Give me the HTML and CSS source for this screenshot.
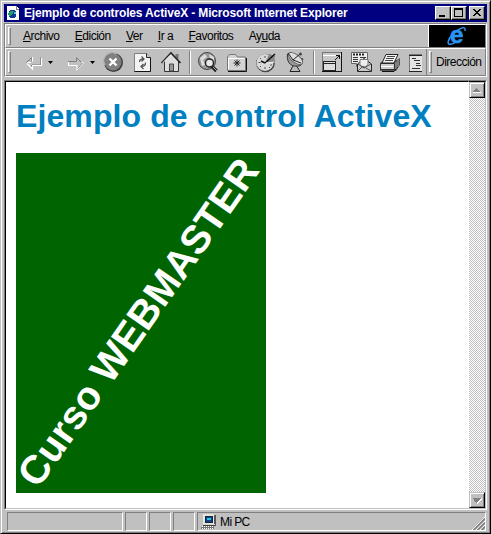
FILE: index.html
```
<!DOCTYPE html>
<html lang="es">
<head>
<meta charset="utf-8">
<title>Ejemplo de controles ActiveX</title>
<link rel="stylesheet" href="styles.css">
</head>
<body>
<div class="window">
  <header class="titlebar">
    <svg class="app-icon" width="14" height="16" viewBox="0 0 14 16" shape-rendering="crispEdges"><path d="M1 1h9l3 3v11H1z" fill="#fff"/><path d="M10 1v3h3" fill="none" stroke="#808080"/><circle cx="6.5" cy="9" r="4" fill="#103890"/><path d="M5 6h3l-1 3-2 1-1 2-2-2v-2z" fill="#20a060"/><path d="M8 7h2v2H8z" fill="#60c0e8"/></svg>
    <span class="title">Ejemplo de controles ActiveX - Microsoft Internet Explorer</span>
    <div class="controls">
      <span class="ctl"><svg width="12" height="10" shape-rendering="crispEdges"><path d="M2 7h6v2H2z"/></svg></span>
      <span class="ctl"><svg width="12" height="10" shape-rendering="crispEdges"><path d="M1 0h9v9H1zM2 2v6h7V2z" fill-rule="evenodd"/></svg></span>
      <span class="ctl last"><svg width="12" height="10" shape-rendering="crispEdges"><path d="M2 1h2v1h1v1h2V2h1V1h2v1H9v1H8v1H7v1h1v1h1v1h1v1H8V7H7V6H5v1H4v1H2V7h1V6h1V5h1V4H4V3H3V2H2z"/></svg></span>
    </div>
  </header>

  <div class="bars">
    <nav class="menubar">
      <i class="grip"></i>
      <div class="menus">
        <span><u>A</u>rchivo</span><span><u>E</u>dición</span><span><u>V</u>er</span><span><u>I</u>r a</span><span><u>F</u>avoritos</span><span>Ay<u>u</u>da</span>
      </div>
      <div class="brand">
        <svg width="24" height="22" viewBox="0 0 24 22"><text x="5" y="18" class="brand-e">e</text><path d="M6 19C1 21 3 13 9 8S21 0 20 6M3 17c0 3 4 3 8 0" fill="none" stroke="#2895f5" stroke-width="1.500"/></svg>
      </div>
    </nav>
    <div class="toolbar">
      <i class="grip"></i>
      <div class="buttons">
        <svg class="nav-arrow" width="36" height="24" viewBox="0 0 36 24"><g fill="none"><path d="M8.500 7.500v4M3.500 12.500l5-5M8.500 18v-3M17.500 7.500v7.500H9" stroke="#808080"/><path d="M9.500 7v4.500M4 13.500l5.500 5.500v-3.500h9V8M4.500 12.500H8" stroke="#fff" stroke-width="1.200"/></g><path d="M25 11h5l-2.500 3z"/></svg>
        <svg class="nav-arrow" width="36" height="24" viewBox="0 0 36 24"><g fill="none"><path d="M3 11.500h8.500V7.500l5 5" stroke="#808080"/><path d="M3 15.500h9v4l6-6.500-1-1M3.500 12v3" stroke="#fff" stroke-width="1.200"/><path d="M12.500 18.500l5-5.500" stroke="#808080"/></g><path d="M25 11h5l-2.500 3z"/></svg>
        <div class="group">
          <svg viewBox="0 0 24 24"><circle cx="12.500" cy="12.500" r="9.500" fill="#404040"/><circle cx="12" cy="12" r="8.500" fill="#808080"/><path d="M4 15A8 8 0 0 1 15 4" fill="none" stroke="#b0b0b0" stroke-width="1.500"/><path d="M8.500 8.500l7 7m0-7l-7 7" stroke="#fff" stroke-width="2.400"/></svg>
          <svg viewBox="0 0 24 24"><path d="M4.500 3.500h12l4 4v14h-16z" fill="#f4f4f4" stroke="#808080"/><path d="M20.500 7.500v14h-16" fill="none" stroke="#111"/><path d="M16.500 3.500v4h4" fill="#ccc" stroke="#222"/><path d="M9.500 12c0-2 1-3 4-3M11.500 6.500l2.500 2.500-2.500 2.500M15.500 12.500c0 3-1 4-4 4M13.500 14L11 16.500l2.500 2.500" fill="none" stroke="#555" stroke-width="1.300"/></svg>
          <svg viewBox="0 0 24 24"><path d="M5 12l7-8 8 8v9H5z" fill="#ddd"/><path d="M5.500 11v10.500h14V11" fill="none" stroke="#333"/><path d="M16.500 4h3v5h-3z" fill="#777"/><path d="M2.500 13L12 3l9.500 10" fill="none" stroke="#222" stroke-width="1.600"/><path d="M4 12.500L12 4.500" stroke="#fff"/><path d="M10.500 21v-7h4v7z" fill="#999" stroke="#444"/></svg>
        </div>
        <i class="divider"></i>
        <div class="group">
          <svg viewBox="0 0 24 24"><circle cx="11" cy="11" r="8.500" fill="#999" stroke="#444"/><path d="M4 8l5-4 2 3-4 3 2 5-3 1zM13 4l5 3v3l-4-2z" fill="#ddd"/><path d="M15.500 16l5 5" stroke="#222" stroke-width="3.500"/><path d="M17 17l4 4" stroke="#aaa"/><circle cx="13.500" cy="13" r="4" fill="#e8e8e8" stroke="#222" stroke-width="1.400"/></svg>
          <svg viewBox="0 0 24 24"><path d="M2.500 20.500V7l2-2.500h6l2 2.500h8v13.500z" fill="#d4d4d4" stroke="#777"/><path d="M3 21.500h18.500V8" fill="none" stroke="#111"/><path d="M3.500 19V8.500h16" fill="none" stroke="#fff"/><path d="M12 9.500v7M8.500 13h7M9.500 10.500l5 5m0-5l-5 5" stroke="#222"/></svg>
          <svg viewBox="0 0 24 24"><circle cx="11.500" cy="13" r="9.300" fill="#444"/><circle cx="11" cy="12.500" r="8.500" fill="#d8d8d8"/><path d="M11 13l4-9 6 2-1 6z" fill="#888"/><path d="M11 13L21 4M11 13l-4-2" stroke="#111" stroke-width="1.500"/><path d="M12 13l8.500-1" stroke="#eee"/><path d="M11 6v2M11 17v2M4.500 12.500h2M16 15h2M6 8l1 1M6 17l1-1M15 17l1 1" stroke="#555"/></svg>
          <svg viewBox="0 0 24 24"><path d="M11 14l-4 7.500h10L13 15z" fill="#bbb" stroke="#222"/><path d="M4.500 4C3 14 10 18 17.500 15.500L20 9z" fill="#999" stroke="#333"/><ellipse cx="12.500" cy="8.500" rx="8.500" ry="4" transform="rotate(37 12.500 8.500)" fill="#ddd" stroke="#666"/><path d="M10 10l7-6M5 3l5 7 8 3" fill="none" stroke="#222"/><circle cx="17.500" cy="4" r="1.500" fill="#444"/></svg>
        </div>
        <i class="divider"></i>
        <div class="group">
          <svg viewBox="0 0 24 24" shape-rendering="crispEdges"><path d="M2.500 2.500h19v19h-19z" fill="#c8c8c8" stroke="#777"/><path d="M21.500 2v19.500H2" fill="none" stroke="#111"/><path d="M3 5.500h18" stroke="#fff"/><path d="M3.500 11.500h12v9h-12z" fill="#ddd" stroke="#222"/><path d="M3 13.500h12" stroke="#222"/><path d="M15 10l4-4M16 5.500h3.500V9" fill="none" stroke="#111"/></svg>
          <svg viewBox="0 0 24 24"><path d="M2.500 2.500h16v14h-11v-3h-5z" fill="#eee" stroke="#666"/><path d="M4 4.500h12" stroke="#222" stroke-width="2" stroke-dasharray="2 1"/><path d="M4 7.500h5M4 9.500h5M4 11.500h5M11 7.500h6M11 9.500h6" stroke="#333"/><path d="M8.500 14l6.500-5.500L22.500 14v7.500h-14z" fill="#ccc" stroke="#222"/><path d="M11 9.500h8v5L15 18l-4-3z" fill="#eee" stroke="#777"/><path d="M9 21l5-5 3 2 5 3M9 14l6 4 7-4" fill="none" stroke="#555"/></svg>
          <svg viewBox="0 0 24 24"><path d="M2 13l4-3h13l3-2v7l-4 6H2z" fill="#555"/><path d="M2.500 13.500h14v6h-14z" fill="#ccc" stroke="#333"/><path d="M8 4.500h12L16 13H4z" fill="#f4f4f4" stroke="#222"/><path d="M9 6.500h8M8 8.500h8M7 10.500h8" stroke="#444"/><path d="M3 16.500h12" stroke="#fff"/><path d="M4 21.500h12l4-5" fill="none" stroke="#111"/><path d="M18 12v7M20 10v7" stroke="#aaa"/></svg>
          <svg viewBox="0 0 24 24" shape-rendering="crispEdges"><path d="M2.500 4.500h18v17h-18z" fill="#e4e4e4" stroke="#777"/><path d="M2 5.500h18M2 21.500h18" stroke="#222"/><path d="M5 8.500h4M7 10.500h6M9 13.500h4M9 15.500h5M5 18.500h8" stroke="#333"/></svg>
        </div>
      </div>
      <div class="address"><i class="grip"></i><span>Dirección</span></div>
    </div>
  </div>

  <div class="viewport">
    <main class="page">
      <h1>Ejemplo de control ActiveX</h1>
      <svg class="control" width="250" height="340"><text transform="translate(22 336.500) rotate(-55.100)">Curso WEBMASTER</text></svg>
    </main>
    <div class="scrollbar">
      <span class="sb-btn"><svg width="12" height="12" shape-rendering="crispEdges"><path d="M2 8h8v1H2z" fill="#fff"/><path d="M5 4h1v1h1v1h1v1h1v1H2V7h1V6h1V5h1z" fill="#808080"/></svg></span>
      <span class="sb-btn"><svg width="12" height="12" shape-rendering="crispEdges"><path d="M10 5v1L6 10V9z" fill="#fff" stroke="#fff"/><path d="M2 4h8v1H9v1H8v1H7v1H6v1H5V8H4V7H3V5H2z" fill="#808080"/></svg></span>
    </div>
  </div>

  <footer class="status">
    <div class="pane wide"></div><div class="pane"></div><div class="pane"></div><div class="pane"></div>
    <div class="pane zone">
      <svg width="16" height="16" viewBox="0 0 16 16" shape-rendering="crispEdges"><path d="M13 1h2v11h-2z" fill="#555"/><path d="M2 0h11v11H2z" fill="#e8e8d8"/><path d="M4 2h8v7H4z" fill="#102050"/><path d="M5 3h6v5H5z" fill="#104080"/><path d="M6 4h4v2H6z" fill="#20c8d8"/><path d="M2 10h12v2H2z" fill="#d8d8c8"/><path d="M2 11h12v1H2z" fill="#444"/><path d="M1 12h12v3H0z" fill="#777"/><path d="M1 12.500h11M1 14.500h11" stroke="#fff" stroke-dasharray="1 1"/></svg>
      <span>Mi PC</span>
      <svg class="resize" width="13" height="13"><path d="M0 13L13 0M4 13l9-9M8 13l5-5" stroke="#fff"/><path d="M1.500 13L13 1.500M5.500 13L13 5.500M9.500 13L13 9.500" stroke="#808080" stroke-width="1.700"/></svg>
    </div>
  </footer>
</div>
</body>
</html>
```
FILE: styles.css
```
* { box-sizing: border-box; }
body { margin: 0; overflow: hidden; background: #c0c0c0; }
svg { display: block; flex: none; }
.window {
  width: 491px; height: 534px; padding: 2px;
  display: flex; flex-direction: column;
  background: #c0c0c0;
  border: 1px solid; border-color: #c0c0c0 #000 #000 #c0c0c0;
  box-shadow: inset 1px 1px #fff, inset -1px -1px #808080;
  font: 12px/14px "Liberation Sans", Arial, sans-serif;
  color: #000;
}
.titlebar {
  display: flex; align-items: center; flex: none;
  height: 18px; margin: 1px 0 0 1px; width: 483px;
  padding: 0 2px 0 2px; background: #000080; color: #fff;
}
.title { margin-left: 4px; font-weight: bold; font-size: 12px; white-space: nowrap; letter-spacing: -0.15px; }
.controls { display: flex; margin-left: auto; }
.ctl {
  width: 16px; height: 14px; padding: 2px 0 0 2px; background: #c0c0c0;
  border: 1px solid; border-color: #fff #000 #000 #fff;
  box-shadow: inset -1px -1px #808080;
}
.ctl.last { margin-left: 2px; }
.ctl svg { margin: -1px 0 0 -1px; }

.bars { flex: none; width: 483px; height: 54px; margin: 1px 0 0 1px; border: 1px solid; border-color: #808080 #fff #fff #808080; }
.menubar { display: flex; height: 24px; border: 1px solid; border-color: #fff #808080 #808080 #fff; padding-left: 2px; }
.grip { flex: none; width: 3px; border: 1px solid; border-color: #fff #808080 #808080 #fff; margin: 2px 0; }
.menus { display: flex; gap: 15.3px; flex: 1; padding: 5px 0 0 12px; font-size: 12px; line-height: 13px; letter-spacing: -0.5px; white-space: nowrap; }
.menus u { text-underline-offset: 1px; }
.brand { width: 57px; background: #000; border-left: 1px solid #fff; display: flex; justify-content: center; }
.brand-e { font: bold 24px "Liberation Sans", sans-serif; fill: #2895f5; stroke: #2895f5; stroke-width: 0.6px; }
.toolbar { display: flex; height: 28px; border: 1px solid; border-color: #fff #808080 #808080 #fff; padding-left: 2px; }
.buttons { display: flex; flex: none; width: 411px; margin-right: 4px; padding: 1px 0 0 12px; overflow: hidden; }
.nav-arrow { margin-right: 6px; }
.nav-arrow:nth-of-type(2) { margin-right: 0; }
.group { display: flex; flex: none; gap: 5px; margin-right: 5px; }
.group svg { width: 24px; height: 24px; }
.divider { flex: none; width: 2px; margin: 1px 5px 1px 1px; border-left: 1px solid #808080; border-right: 1px solid #fff; }
.address { display: flex; flex: 1; border-left: 1px solid #808080; padding-left: 2px; gap: 4px; font-size: 12px; letter-spacing: -0.5px; line-height: 27px; }

.viewport {
  display: flex; flex: none; width: 483px; height: 430px; margin: 3px 0 0 1px;
  border: 1px solid; border-color: #808080 #fff #fff #808080;
  background: #fff;
}
.page { flex: 1; border: 1px solid; border-color: #000 transparent #c0c0c0 #000; padding: 16px 0 0 10px; }
h1 { margin: 0; height: 55px; font: bold 32px/36px "Liberation Sans", Arial, sans-serif; letter-spacing: 0.1px; color: #0080c0; white-space: nowrap; }
.control { background: #006400; }
.control text { font: bold 40px "Liberation Sans", Arial, sans-serif; fill: #fff; }
.scrollbar {
  display: flex; flex-direction: column; justify-content: space-between;
  width: 17px; border: 1px solid; border-width: 1px 1px 1px 0; border-color: #000 #c0c0c0 #c0c0c0;
  background: repeating-conic-gradient(#c0c0c0 0 25%, #fff 0 50%) 0 0 / 2px 2px;
}
.sb-btn {
  height: 16px; width: 16px; padding: 1px; background: #c0c0c0;
  border: 1px solid; border-color: #c0c0c0 #000 #000 #c0c0c0;
  box-shadow: inset 1px 1px #fff, inset -1px -1px #808080;
}

.status { display: flex; gap: 2px; flex: none; height: 19px; margin: 2px 2px 0 4px; }
.pane { width: 22px; border: 1px solid; border-color: #808080 #fff #fff #808080; }
.pane.wide { width: 116px; }
.pane.zone { position: relative; flex: 1; display: flex; padding: 1px 0 0 3px; gap: 3px; font-size: 12px; letter-spacing: -0.6px; line-height: 16px; }
.resize { position: absolute; right: 0; bottom: 0; }
```
